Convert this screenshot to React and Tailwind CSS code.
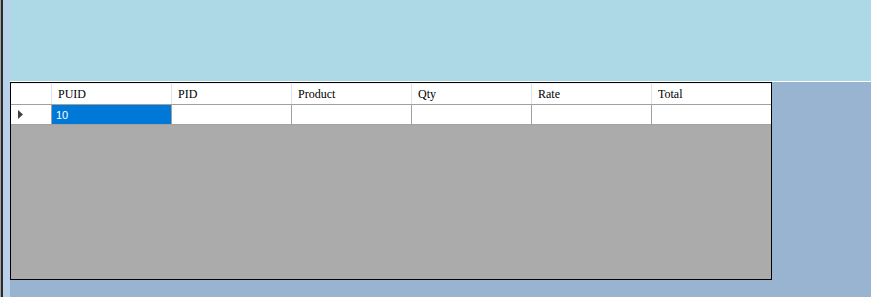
export default function App() {
  const cols = ["PUID", "PID", "Product", "Qty", "Rate", "Total"];
  return (
    <div className="flex w-[871px] h-[297px] overflow-hidden bg-[#99b4d1]">
      {/* left window edge */}
      <div className="w-px h-full bg-[#a0a0a0]" />
      <div className="w-[2px] h-full bg-[#2a2a2a]" />
      <div className="w-[7px] h-full bg-[#b9d1ea]" />
      {/* content */}
      <div className="flex-1 flex flex-col">
        <div className="h-[81px] bg-[#add8e6] shrink-0" />
        <div className="h-px bg-white shrink-0" />
        <div className="flex-1">
          <div className="w-[762px] h-[198px] border border-black bg-[#ababab] flex flex-col">
            {/* header */}
            <div className="flex h-[21px] bg-white border-t border-[#f0f0f0] shrink-0">
              <div className="w-[41px] border-r border-[#e3e3e3]" />
              {cols.map((c, i) => (
                <div
                  key={c}
                  className={`${i < 5 ? "border-r border-[#e3e3e3]" : ""} pl-[6px] pt-[3px] text-[12px] leading-[14px] text-black`}
                  style={{ fontFamily: '"Liberation Serif", serif', width: i < 5 ? 120 : 119 }}
                >
                  {c}
                </div>
              ))}
            </div>
            {/* data row */}
            <div className="flex h-[21px] bg-white border-t border-b border-[#a0a0a0] shrink-0">
              <div className="w-[41px] border-r border-[#a0a0a0] flex items-center pl-[7px]">
                <svg width="5" height="9" viewBox="0 0 5 9">
                  <path d="M0 0 L5 4.5 L0 9 Z" fill="#404040" />
                </svg>
              </div>
              {cols.map((c, i) => (
                <div
                  key={c}
                  className={`${i < 5 ? "border-r border-[#a0a0a0]" : ""} ${i === 0 ? "bg-[#0078d7] text-white" : ""} pl-[4px] pt-px text-[11px] leading-[18px]`}
                  style={{ fontFamily: '"Liberation Sans", sans-serif', width: i < 5 ? 120 : 119 }}
                >
                  {i === 0 ? "10" : ""}
                </div>
              ))}
            </div>
          </div>
        </div>
      </div>
    </div>
  );
}
